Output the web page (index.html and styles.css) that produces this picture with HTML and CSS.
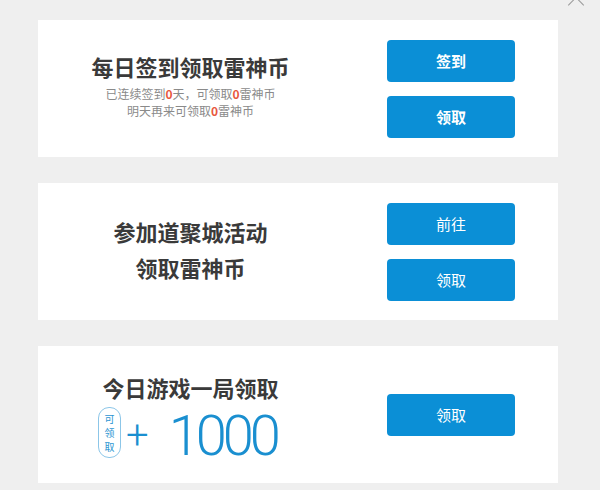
FILE: index.html
```html
<!DOCTYPE html>
<html lang="zh-CN">
<head>
    <meta charset="UTF-8">
    <title>领取雷神币</title>
    <link rel="stylesheet" href="styles.css">
</head>
<body>
    <div class="panel">
        <span class="close"></span>

        <div class="card">
            <div class="info">
                <h2 class="title">每日签到领取雷神币</h2>
                <p class="sub">已连续签到<b>0</b>天，可领取<b>0</b>雷神币</p>
                <p class="sub">明天再来可领取<b>0</b>雷神币</p>
            </div>
            <div class="actions">
                <button class="btn bold">签到</button>
                <button class="btn bold">领取</button>
            </div>
        </div>

        <div class="card">
            <div class="info">
                <h2 class="title two">参加道聚城活动<br>领取雷神币</h2>
            </div>
            <div class="actions">
                <button class="btn">前往</button>
                <button class="btn">领取</button>
            </div>
        </div>

        <div class="card">
            <div class="info game">
                <h2 class="title">今日游戏一局领取</h2>
                <div class="reward">
                    <span class="pill">可<br>领<br>取</span>
                    <span class="plus">+</span>
                    <span class="amount">1000</span>
                </div>
            </div>
            <div class="actions">
                <button class="btn">领取</button>
            </div>
        </div>
    </div>
</body>
</html>
```

FILE: styles.css
```css
body {
    margin: 0;
    background-color: #efefef;
    font-family: "Noto Sans CJK SC", "Noto Sans", sans-serif;
    color: #333;
}

.panel {
    position: relative;
    width: 600px;
    height: 490px;
    padding: 20px 0 0 38px;
    box-sizing: border-box;
    display: flex;
    flex-direction: column;
    gap: 26px;
}

.close {
    position: absolute;
    left: 568px;
    top: -10px;
    width: 16px;
    height: 16px;
}

.close::before,
.close::after {
    content: "";
    position: absolute;
    left: -3px;
    top: 7px;
    width: 22px;
    height: 1px;
    background-color: #999;
    transform: rotate(45deg);
}

.close::after {
    transform: rotate(-45deg);
}

.card {
    width: 520px;
    height: 137px;
    background-color: #fff;
    display: flex;
    align-items: center;
    flex-shrink: 0;
}

.info {
    width: 305px;
    text-align: center;
    margin-bottom: 8px;
}

.info.game {
    margin-bottom: 0;
    margin-top: 6px;
}

.title {
    margin: 0;
    font-size: 22px;
    line-height: 30px;
    font-weight: bold;
    color: #3a3a3a;
}

.title.two {
    line-height: 36px;
    margin-top: 2px;
}

.sub {
    margin: 0;
    font-size: 12px;
    line-height: 17px;
    color: #8a8a8a;
}

.sub:first-of-type {
    margin-top: 4px;
}

.sub b {
    color: #e8583e;
}

.actions {
    margin-left: 44px;
    display: flex;
    flex-direction: column;
    gap: 14px;
}

.btn {
    width: 128px;
    height: 42px;
    border: none;
    border-radius: 4px;
    background-color: #0b8fd6;
    color: #fff;
    font-family: "Noto Sans CJK SC", sans-serif;
    font-size: 15px;
    cursor: pointer;
}

.btn.bold {
    font-weight: bold;
}

.reward {
    display: flex;
    align-items: center;
    justify-content: center;
    height: 56px;
    margin-top: 6px;
    margin-right: 6px;
}

.pill {
    width: 21px;
    height: 49px;
    margin-top: -6px;
    border: 1px solid #8cc6e8;
    border-radius: 11px;
    font-size: 10px;
    line-height: 14px;
    color: #2c95d2;
    display: flex;
    align-items: center;
    justify-content: center;
    text-align: center;
}

.plus {
    margin-left: 5px;
    font-family: Roboto, sans-serif;
    font-weight: 300;
    font-size: 40px;
    line-height: 40px;
    color: #1a8fd0;
}

.amount {
    margin-left: 20px;
    font-family: Roboto, sans-serif;
    font-weight: 300;
    font-size: 56px;
    line-height: 56px;
    letter-spacing: -4px;
    color: #1a8fd0;
}
```
